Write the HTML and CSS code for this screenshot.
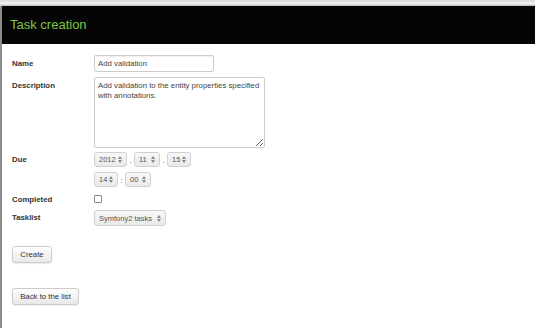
FILE: index.html
```html
<!DOCTYPE html>
<html lang="en">
<head>
    <meta charset="UTF-8">
    <title>Task creation</title>
    <link rel="stylesheet" href="styles.css">
</head>
<body>
    <div class="chrome"></div>
    <div class="page">
        <div class="header">
            <h1>Task creation</h1>
        </div>

        <form class="task-form">
            <div class="row">
                <label class="row-label">Name</label>
                <input type="text" class="text-input" value="Add validation" spellcheck="false">
            </div>
            <div class="row row-desc">
                <label class="row-label">Description</label>
                <textarea class="text-area" spellcheck="false">Add validation to the entity properties specified with annotations.</textarea>
            </div>
            <div class="row row-due">
                <label class="row-label">Due</label>
                <div class="due-fields">
                    <div class="sel-line">
                        <span class="sel w-year">2012 <i class="arr"></i></span>
                        <span class="sep">.</span>
                        <span class="sel w-mon">11 <i class="arr"></i></span>
                        <span class="sep">.</span>
                        <span class="sel w-day">15 <i class="arr"></i></span>
                    </div>
                    <div class="sel-line">
                        <span class="sel w-day">14 <i class="arr"></i></span>
                        <span class="sep">:</span>
                        <span class="sel w-mon">00 <i class="arr"></i></span>
                    </div>
                </div>
            </div>
            <div class="row row-check">
                <label class="row-label">Completed</label>
                <span class="check"></span>
            </div>
            <div class="row row-list">
                <label class="row-label">Tasklist</label>
                <span class="sel w-list">Symfony2 tasks <i class="arr"></i></span>
            </div>

            <button type="button" class="btn btn-create">Create</button>
        </form>

        <button type="button" class="btn btn-back">Back to the list</button>
    </div>
</body>
</html>
```

FILE: styles.css
```css
body {
    margin: 0;
    font-family: "Liberation Sans", Arial, sans-serif;
    background-color: #fff;
    color: #333;
}
.chrome {
    height: 6px;
    background: linear-gradient(#d9d9d9, #f0f0f0 60%, #bdbdbd);
}
.page {
    border-left: 2px solid #8c8c8c;
    height: 322px;
    box-sizing: border-box;
}
.header {
    background-color: #050505;
    height: 38px;
    padding-left: 8px;
}
.header h1 {
    margin: 0;
    font-size: 13px;
    font-weight: normal;
    line-height: 38px;
    color: #7fc544;
}
.task-form {
    padding: 11px 0 0 10px;
}
.row {
    display: flex;
    align-items: flex-start;
    margin-bottom: 5px;
}
.row-label {
    width: 82px;
    flex-shrink: 0;
    font-size: 7.8px;
    font-weight: bold;
    line-height: 17px;
    color: #333;
}
.text-input {
    width: 120px;
    height: 17px;
    box-sizing: border-box;
    border: 1px solid #ccc;
    border-radius: 2px;
    padding: 0 3px;
    font-family: inherit;
    font-size: 7.8px;
    color: #444;
    box-shadow: inset 0 1px 1px rgba(0, 0, 0, 0.06);
}
.text-area {
    width: 171px;
    height: 71px;
    box-sizing: border-box;
    border: 1px solid #ccc;
    border-radius: 2px;
    padding: 3px 3px;
    font-family: inherit;
    font-size: 7.8px;
    line-height: 10px;
    color: #444;
    resize: both;
}
.row-desc {
    margin-bottom: 4px;
}
.row-due .row-label {
    line-height: 16px;
}
.due-fields {
    display: flex;
    flex-direction: column;
    gap: 5px;
}
.sel-line {
    display: flex;
    align-items: center;
}
.sel {
    display: inline-flex;
    align-items: center;
    justify-content: space-between;
    height: 15px;
    box-sizing: border-box;
    padding: 0 3px 0 4px;
    border: 1px solid #d0d0d0;
    border-radius: 3px;
    background: linear-gradient(#f8f8f8, #e9e9e9);
    font-size: 7.5px;
    color: #555;
}
.arr {
    width: 5px;
    height: 7px;
    position: relative;
}
.arr::before,
.arr::after {
    content: "";
    position: absolute;
    left: 0;
    border-left: 2px solid transparent;
    border-right: 2px solid transparent;
}
.arr::before {
    top: 0;
    border-bottom: 3px solid #888;
}
.arr::after {
    bottom: 0;
    border-top: 3px solid #888;
}
.sep {
    width: 7px;
    text-align: center;
    font-size: 8px;
    color: #333;
    align-self: flex-end;
    line-height: 12px;
}
.w-year { width: 33px; }
.w-mon { width: 26px; }
.w-day { width: 24px; }
.w-list { width: 72px; height: 16px; }
.row-check {
    margin-top: 5px;
    margin-bottom: 3px;
}
.row-check .row-label {
    line-height: 15px;
}
.check {
    width: 6px;
    height: 6px;
    margin-top: 3px;
    border: 1px solid #8a8a8a;
    border-radius: 1px;
    background: #fff;
}
.row-list .row-label {
    line-height: 16px;
}
.btn {
    display: block;
    height: 17px;
    padding: 0 7px;
    border: 1px solid #ccc;
    border-radius: 3px;
    background: linear-gradient(#fff, #e8e8e8);
    box-shadow: 0 1px 1px rgba(0, 0, 0, 0.08);
    font-family: inherit;
    font-size: 7.8px;
    color: #333;
    cursor: pointer;
}
.btn-create {
    margin-top: 20px;
    width: 40px;
}
.btn-back {
    margin: 25px 0 0 10px;
    width: 67px;
}
```
